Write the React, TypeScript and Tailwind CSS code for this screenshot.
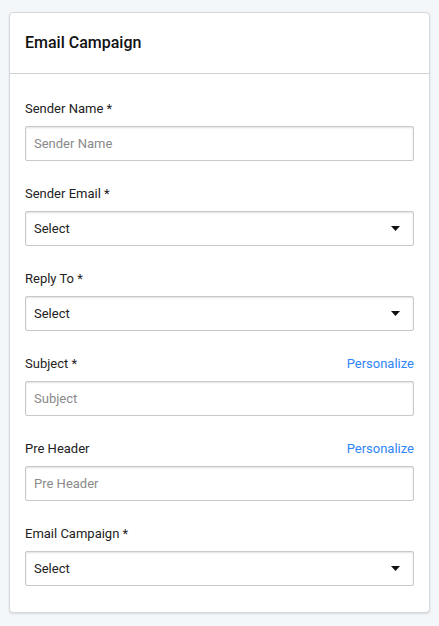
import { ReactNode } from "react";

function Caret() {
  return (
    <svg width="9" height="5" viewBox="0 0 9 5" className="shrink-0">
      <path d="M0 0h9L4.5 5z" fill="#111" />
    </svg>
  );
}

function Field({
  label,
  personalize,
  children,
}: {
  label: string;
  personalize?: boolean;
  children: ReactNode;
}) {
  return (
    <div className="flex flex-col">
      <div className="flex h-[17px] items-center justify-between">
        <span className="text-[13px] text-[#222]">{label}</span>
        {personalize && (
          <span className="text-[13px] text-[#2f86f6]">Personalize</span>
        )}
      </div>
      <div className="mt-[9px]">{children}</div>
    </div>
  );
}

function TextBox({ placeholder }: { placeholder: string }) {
  return (
    <div className="flex h-[35px] items-center rounded-[2px] border border-[#c9c9c9] px-[8px] text-[13px] text-[#8a8a8a] shadow-[inset_0_1px_2px_rgba(0,0,0,0.12)]">
      {placeholder}
    </div>
  );
}

function SelectBox() {
  return (
    <div className="flex h-[35px] items-center justify-between rounded-[2px] border border-[#c9c9c9] pl-[8px] pr-[13px] text-[13px] text-[#222] shadow-[inset_0_1px_2px_rgba(0,0,0,0.12)]">
      <span>Select</span>
      <Caret />
    </div>
  );
}

export default function App() {
  return (
    <div className="min-h-[626px] bg-[#f4f7fa] px-[9px] pt-[12px] font-['Roboto',sans-serif]">
      <div className="w-[421px] rounded-[4px] border border-[#d5d8dc] bg-white shadow-[0_1px_2px_rgba(0,0,0,0.12)]">
        <div className="flex h-[61px] items-center border-b border-[#cfd2d6] px-[15px]">
          <h2 className="text-[16px] font-medium text-[#111]">Email Campaign</h2>
        </div>
        <div className="flex flex-col gap-[24px] px-[15px] pb-[26px] pt-[26px]">
          <Field label="Sender Name *">
            <TextBox placeholder="Sender Name" />
          </Field>
          <Field label="Sender Email *">
            <SelectBox />
          </Field>
          <Field label="Reply To *">
            <SelectBox />
          </Field>
          <Field label="Subject *" personalize>
            <TextBox placeholder="Subject" />
          </Field>
          <Field label="Pre Header" personalize>
            <TextBox placeholder="Pre Header" />
          </Field>
          <Field label="Email Campaign *">
            <SelectBox />
          </Field>
        </div>
      </div>
    </div>
  );
}
